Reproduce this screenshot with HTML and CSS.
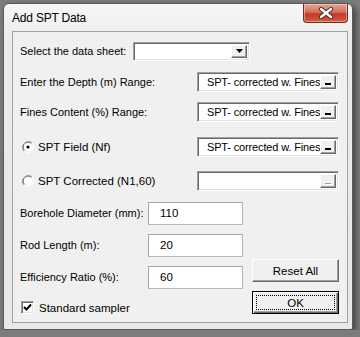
FILE: index.html
```html
<!DOCTYPE html>
<html>
<head>
    <meta name="viewport" content="width=device-width, initial-scale=1">
    <link rel="stylesheet" href="styles.css">
</head>
<body>

<div class="window">
    <div class="titlebar">
        <span class="title">Add SPT Data</span>
        <a class="close" href="javascript:void(0);">
            <svg width="16" height="12" viewBox="0 0 16 12">
                <path d="M3 2 L13 10 M13 2 L3 10" stroke="#4a2a25" stroke-width="4.2" stroke-linecap="round"/>
                <path d="M3 2 L13 10 M13 2 L3 10" stroke="#fff" stroke-width="2.4" stroke-linecap="round"/>
            </svg>
        </a>
    </div>

    <div class="client">
        <div class="row row-sheet">
            <label class="lbl-sheet">Select the data sheet:</label>
            <div class="combo">
                <span class="combo-text"></span>
                <span class="combo-btn">
                    <svg width="7" height="4" viewBox="0 0 7 4"><path d="M0 0 H7 L3.5 4 Z" fill="#000"/></svg>
                </span>
            </div>
        </div>

        <div class="row row-depth">
            <label>Enter the Depth (m) Range:</label>
            <div class="refedit">
                <span class="ref-text">SPT- corrected w. Fines</span>
                <span class="ref-btn"><span class="dash"></span></span>
            </div>
        </div>

        <div class="row row-fines">
            <label>Fines Content (%) Range:</label>
            <div class="refedit">
                <span class="ref-text">SPT- corrected w. Fines</span>
                <span class="ref-btn"><span class="dash"></span></span>
            </div>
        </div>

        <div class="row row-field">
            <label class="radio">
                <svg width="12" height="12" viewBox="0 0 12 12">
                    <path d="M10.2 1.8 A6 6 0 0 0 1.8 10.2" fill="none" stroke="#a0a0a0" stroke-width="1"/>
                    <path d="M9.4 2.6 A4.8 4.8 0 0 0 2.6 9.4" fill="none" stroke="#696969" stroke-width="1"/>
                    <path d="M1.8 10.2 A6 6 0 0 0 10.2 1.8" fill="none" stroke="#fff" stroke-width="1"/>
                    <circle cx="6" cy="6" r="4.2" fill="#fff"/>
                    <circle cx="6" cy="6" r="1.6" fill="#000"/>
                </svg>
                SPT Field (Nf)
            </label>
            <div class="refedit">
                <span class="ref-text">SPT- corrected w. Fines</span>
                <span class="ref-btn"><span class="dash"></span></span>
            </div>
        </div>

        <div class="row row-corr">
            <label class="radio">
                <svg width="12" height="12" viewBox="0 0 12 12">
                    <path d="M10.2 1.8 A6 6 0 0 0 1.8 10.2" fill="none" stroke="#a0a0a0" stroke-width="1"/>
                    <path d="M9.4 2.6 A4.8 4.8 0 0 0 2.6 9.4" fill="none" stroke="#696969" stroke-width="1"/>
                    <path d="M1.8 10.2 A6 6 0 0 0 10.2 1.8" fill="none" stroke="#fff" stroke-width="1"/>
                    <circle cx="6" cy="6" r="4.2" fill="#fff"/>
                </svg>
                SPT Corrected (N1,60)
            </label>
            <div class="refedit">
                <span class="ref-text"></span>
                <span class="ref-btn disabled"><span class="dash"></span></span>
            </div>
        </div>

        <div class="lower">
            <div class="fields">
                <div class="row">
                    <label class="lbl-field">Borehole Diameter (mm):</label>
                    <div class="textbox">110</div>
                </div>
                <div class="row">
                    <label class="lbl-field">Rod Length (m):</label>
                    <div class="textbox">20</div>
                </div>
                <div class="row">
                    <label class="lbl-field">Efficiency Ratio (%):</label>
                    <div class="textbox">60</div>
                </div>
                <div class="row row-check">
                    <label class="check">
                        <span class="checkbox">
                            <svg width="9" height="9" viewBox="0 0 9 9"><path d="M1 4 L3.5 6.5 L8 1.5" fill="none" stroke="#000" stroke-width="2"/></svg>
                        </span>
                        Standard sampler
                    </label>
                </div>
            </div>
            <div class="buttons">
                <div class="button">Reset All</div>
                <div class="button default"><span class="focus">OK</span></div>
            </div>
        </div>
    </div>
</div>

</body>
</html>
```

FILE: styles.css
```css
body {
  margin: 0;
  background: #7c7c7c;
  font-family: "Liberation Sans", Arial, sans-serif;
  font-size: 11px;
  color: #000;
}
* {
  box-sizing: border-box;
}

/* window frame */
.window {
  margin: 3px 0 0 3px;
  width: 350px;
  height: 327px;
  padding: 0 4px 7px 8px;
  border: 1px solid #5a5a5a;
  border-radius: 6px 6px 2px 2px;
  background: linear-gradient(#f6f6f6, #ebebeb 40px, #e9e9e9);
  box-shadow: 3px 3px 6px rgba(0, 0, 0, 0.45);
}

.titlebar {
  height: 27px;
  display: flex;
  align-items: flex-start;
  justify-content: space-between;
}

.title {
  font-size: 12px;
  margin-top: 7px;
  letter-spacing: -0.2px;
}

.close {
  width: 45px;
  height: 19px;
  display: flex;
  align-items: center;
  justify-content: center;
  border: 1px solid #6d2d22;
  border-top: none;
  border-radius: 0 0 4px 4px;
  background: linear-gradient(#e6a596, #d3705e 45%, #c23a25 55%, #d65a44);
  box-shadow: inset 0 0 0 1px rgba(255, 220, 210, 0.5);
}

/* client area */
.client {
  height: 292px;
  border: 1px solid #a0a0a0;
  background: #f0f0f0;
  padding: 3px 8px 0 7px;
}

.row {
  display: flex;
  align-items: center;
  height: 32px;
}
.row-depth { height: 29px; }
.row-field { height: 37px; }

.row .refedit {
  margin-left: auto;
}

.lbl-sheet {
  width: 113px;
}

/* combo box */
.combo {
  width: 117px;
  height: 19px;
  display: flex;
  background: #fff;
  border-top: 1px solid #a0a0a0;
  border-left: 1px solid #a0a0a0;
  border-right: 1px solid #fff;
  border-bottom: 1px solid #fff;
  box-shadow: inset 1px 1px 0 #696969, inset -1px -1px 0 #e3e3e3;
  padding: 2px;
}
.combo-text {
  flex: 1;
}
.combo-btn {
  width: 16px;
  display: flex;
  align-items: center;
  justify-content: center;
  background: #f0f0f0;
  border-top: 1px solid #fff;
  border-left: 1px solid #fff;
  border-right: 1px solid #696969;
  border-bottom: 1px solid #696969;
  box-shadow: inset -1px -1px 0 #a0a0a0;
}

/* ref edit */
.refedit {
  width: 142px;
  height: 20px;
  display: flex;
  background: #fff;
  border-top: 1px solid #a0a0a0;
  border-left: 1px solid #a0a0a0;
  border-right: 1px solid #fff;
  border-bottom: 1px solid #fff;
  box-shadow: inset 1px 1px 0 #696969, inset -1px -1px 0 #e3e3e3;
  padding: 2px 2px 2px 9px;
}
.ref-text {
  flex: 1;
  overflow: hidden;
  white-space: nowrap;
  line-height: 14px;
  font-size: 11px;
  letter-spacing: -0.15px;
}
.ref-btn {
  width: 16px;
  display: flex;
  align-items: flex-end;
  justify-content: center;
  padding-bottom: 3px;
  background: #f0f0f0;
  border-top: 1px solid #fff;
  border-left: 1px solid #fff;
  border-right: 1px solid #696969;
  border-bottom: 1px solid #696969;
  box-shadow: inset -1px -1px 0 #a0a0a0;
}
.dash {
  width: 6px;
  height: 2px;
  background: #000;
}
.ref-btn.disabled .dash {
  background: #a0a0a0;
  height: 1px;
  box-shadow: 1px 1px 0 #fff;
}

/* radio buttons */
.radio {
  display: flex;
  align-items: center;
  margin-left: 2px;
  font-size: 11.5px;
}
.radio svg {
  margin-right: 4px;
}

/* lower part: text boxes and buttons */
.lower {
  display: flex;
  justify-content: space-between;
}

.fields {
  display: flex;
  flex-direction: column;
}

.lbl-field {
  width: 128px;
}

.textbox {
  width: 95px;
  height: 23px;
  background: #fff;
  border: 1px solid #b8b8b8;
  border-top-color: #a6a6a6;
  border-left-color: #a6a6a6;
  padding: 4px 0 0 11px;
  font-size: 11.5px;
}

.row-check {
  height: 29px;
}

.check {
  display: flex;
  align-items: center;
  margin-left: 1px;
  font-size: 11.5px;
}
.checkbox {
  width: 13px;
  height: 13px;
  display: flex;
  align-items: center;
  justify-content: center;
  margin-right: 5px;
  background: #fff;
  border-top: 1px solid #a0a0a0;
  border-left: 1px solid #a0a0a0;
  border-right: 1px solid #fff;
  border-bottom: 1px solid #fff;
  box-shadow: inset 1px 1px 0 #696969, inset -1px -1px 0 #e3e3e3;
}

.buttons {
  display: flex;
  flex-direction: column;
  justify-content: flex-end;
  gap: 9px;
  padding-bottom: 8px;
}

.button {
  width: 87px;
  height: 23px;
  display: flex;
  align-items: center;
  justify-content: center;
  background: #f0f0f0;
  border-top: 1px solid #fff;
  border-left: 1px solid #fff;
  border-right: 1px solid #696969;
  border-bottom: 1px solid #696969;
  box-shadow: inset -1px -1px 0 #a0a0a0;
  font-size: 11.5px;
}

.button.default {
  border: 1px solid #000;
  box-shadow: inset 1px 1px 0 #fff, inset -1px -1px 0 #696969, inset -2px -2px 0 #a0a0a0;
  padding: 3px;
}
.focus {
  flex: 1;
  align-self: stretch;
  display: flex;
  align-items: center;
  justify-content: center;
  border: 1px dotted #000;
}
```
